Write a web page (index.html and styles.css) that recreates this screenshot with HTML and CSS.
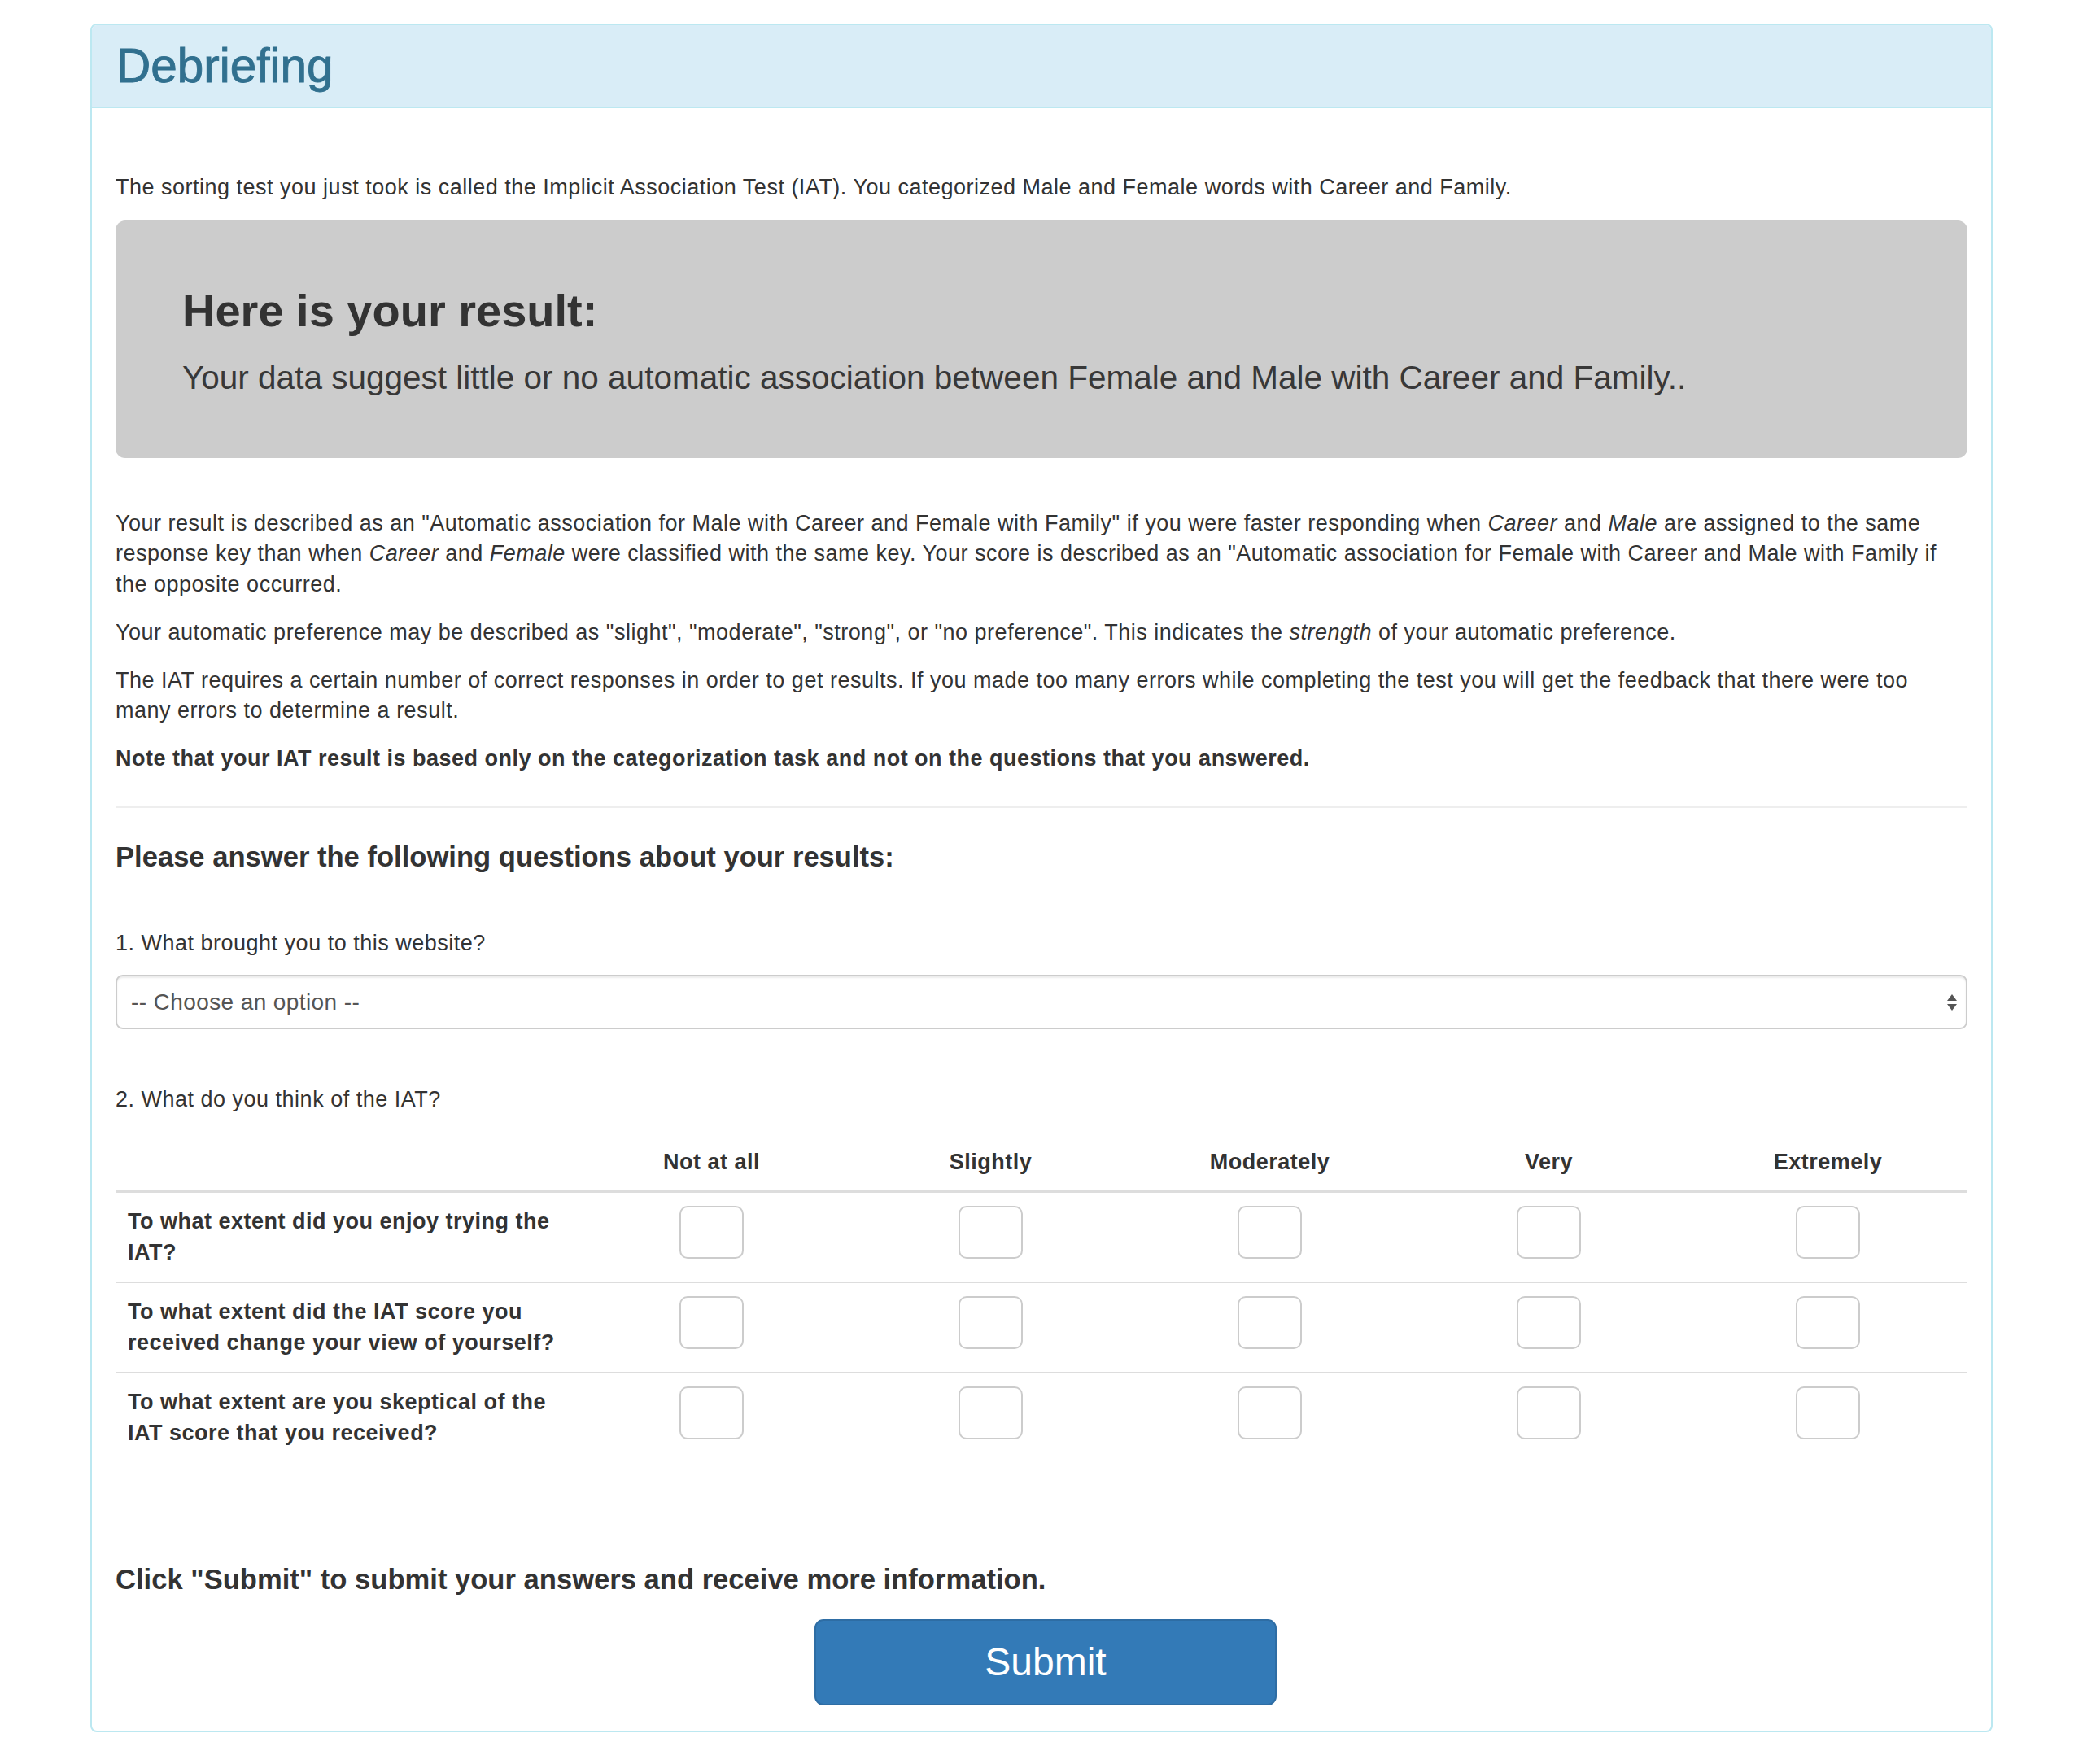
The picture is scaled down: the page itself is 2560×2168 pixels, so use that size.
FILE: index.html
```html
<!DOCTYPE html>
<html lang="en">
<head>
<meta charset="utf-8">
<title>Debriefing</title>
<link rel="stylesheet" href="styles.css">
</head>
<body>
<div class="page">
  <section class="panel">
    <header class="panel-heading">
      <h2 class="panel-title">Debriefing</h2>
    </header>
    <div class="panel-body">
      <p class="intro">The sorting test you just took is called the Implicit Association Test (IAT). You categorized Male and Female words with Career and Family.</p>

      <div class="jumbotron">
        <h2 class="result-title">Here is your result:</h2>
        <p class="result-text">Your data suggest little or no automatic association between Female and Male with Career and Family..</p>
      </div>

      <p>Your result is described as an "Automatic association for Male with Career and Female with Family" if you were faster responding when <em>Career</em> and <em>Male</em> are assigned to the same response key than when <em>Career</em> and <em>Female</em> were classified with the same key. Your score is described as an "Automatic association for Female with Career and Male with Family if the opposite occurred.</p>
      <p>Your automatic preference may be described as "slight", "moderate", "strong", or "no preference". This indicates the <em>strength</em> of your automatic preference.</p>
      <p>The IAT requires a certain number of correct responses in order to get results. If you made too many errors while completing the test you will get the feedback that there were too many errors to determine a result.</p>
      <p class="note"><strong>Note that your IAT result is based only on the categorization task and not on the questions that you answered.</strong></p>

      <hr class="divider">

      <h4 class="section-title">Please answer the following questions about your results:</h4>

      <div class="question q1">
        <label class="q-label">1. What brought you to this website?</label>
        <div class="select">
          <span class="select-text">-- Choose an option --</span>
          <svg class="select-arrow" width="14" height="24" viewBox="0 0 14 24"><path d="M7 2 L13 10 L1 10 Z" fill="#555"/><path d="M1 14 L13 14 L7 22 Z" fill="#555"/></svg>
        </div>
      </div>

      <div class="question q2">
        <label class="q-label">2. What do you think of the IAT?</label>
        <table class="likert">
          <colgroup>
            <col class="col-label">
            <col class="col-opt"><col class="col-opt"><col class="col-opt"><col class="col-opt"><col class="col-opt">
          </colgroup>
          <thead>
            <tr><th></th><th>Not at all</th><th>Slightly</th><th>Moderately</th><th>Very</th><th>Extremely</th></tr>
          </thead>
          <tbody>
            <tr>
              <th class="row-label">To what extent did you enjoy trying the IAT?</th>
              <td><span class="box"></span></td><td><span class="box"></span></td><td><span class="box"></span></td><td><span class="box"></span></td><td><span class="box"></span></td>
            </tr>
            <tr>
              <th class="row-label">To what extent did the IAT score you received change your view of yourself?</th>
              <td><span class="box"></span></td><td><span class="box"></span></td><td><span class="box"></span></td><td><span class="box"></span></td><td><span class="box"></span></td>
            </tr>
            <tr>
              <th class="row-label">To what extent are you skeptical of the IAT score that you received?</th>
              <td><span class="box"></span></td><td><span class="box"></span></td><td><span class="box"></span></td><td><span class="box"></span></td><td><span class="box"></span></td>
            </tr>
          </tbody>
        </table>
      </div>

      <h4 class="submit-title">Click "Submit" to submit your answers and receive more information.</h4>
      <div class="submit-row">
        <button class="btn-submit" type="button">Submit</button>
      </div>
    </div>
  </section>
</div>
</body>
</html>
```

FILE: styles.css
```css
html, body {
  margin: 0;
  padding: 0;
  background: #fff;
}
body {
  font-family: "Liberation Sans", Arial, Helvetica, sans-serif;
  font-size: 27px;
  letter-spacing: 0.5px;
  line-height: 37.5px;
  color: #333;
}
.page {
  padding: 29px 111px 40px 111px;
}
.panel {
  border: 2px solid #bce8f1;
  border-radius: 8px;
  background: #fff;
  overflow: hidden;
}
.panel-heading {
  background: #d9edf7;
  border-bottom: 2px solid #bce8f1;
  height: 100px;
  padding: 0 30px;
  display: flex;
  align-items: center;
}
.panel-title {
  margin: 0;
  font-size: 58.5px;
  line-height: 62px;
  font-weight: 400;
  letter-spacing: 0;
  -webkit-text-stroke: 0.9px #31708f;
  color: #31708f;
}
.panel-body {
  padding: 78.5px 29px 31px 29px;
}
p {
  margin: 0 0 21.6px 0;
}
.intro {
  margin-bottom: 21.5px;
}
.jumbotron {
  background: #ccc;
  border-radius: 12px;
  padding: 80px 82px 71.5px 82px;
  margin-bottom: 61.6px;
}
.result-title {
  margin: 0 0 24px 0;
  font-size: 56px;
  line-height: 62px;
  font-weight: 700;
  letter-spacing: 0;
  color: #333;
}
.result-text {
  margin: 0;
  font-size: 40.5px;
  line-height: 55px;
  font-weight: 400;
  letter-spacing: 0;
  color: #383838;
}
.note {
  margin-bottom: 0;
}
.divider {
  border: 0;
  border-top: 2px solid #eee;
  margin: 39.5px 0 41.6px 0;
}
.section-title,
.submit-title {
  margin: 0;
  font-size: 34.6px;
  line-height: 37px;
  font-weight: 700;
  letter-spacing: 0;
  color: #333;
}
.question {
  display: flex;
  flex-direction: column;
}
.q1 {
  margin-top: 69px;
}
.q1 .q-label {
  margin-bottom: 20px;
}
.q2 {
  margin-top: 68px;
}
.q-label {
  display: block;
  margin-bottom: 24px;
}
.select {
  height: 67px;
  box-sizing: border-box;
  border: 2px solid #ccc;
  border-radius: 9px;
  box-shadow: inset 0 2px 2px rgba(0,0,0,0.075);
  display: flex;
  align-items: center;
  justify-content: space-between;
  padding: 0 10px 0 17px;
  color: #555;
  font-size: 28px;
  letter-spacing: 0.4px;
}
.select-arrow {
  display: block;
}
.likert {
  width: 100%;
  border-collapse: collapse;
  table-layout: fixed;
}
.col-label {
  width: 561px;
}
.likert thead th {
  font-weight: 700;
  text-align: center;
  padding: 15px 15px;
  border-bottom: 4px solid #ddd;
}
.likert tbody th,
.likert tbody td {
  padding: 17px 15px;
  vertical-align: top;
  border-top: 2px solid #ddd;
}
.likert tbody tr:first-child th,
.likert tbody tr:first-child td {
  border-top: 0;
}
.row-label {
  text-align: left;
  font-weight: 700;
  padding-left: 16px;
  padding-right: 8px;
}
.likert td {
  text-align: center;
}
.box {
  display: inline-block;
  width: 79px;
  height: 65px;
  box-sizing: border-box;
  border: 2px solid #ccc;
  border-radius: 10px;
  vertical-align: top;
  margin-top: -1px;
}
.submit-title {
  margin-top: 126px;
}
.submit-row {
  display: flex;
  justify-content: center;
  margin-top: 30px;
  padding-left: 10px;
}
.btn-submit {
  width: 568px;
  height: 106px;
  background: #337ab7;
  border: 2px solid #2e6da4;
  border-radius: 11px;
  color: #fff;
  font-family: "Liberation Sans", Arial, Helvetica, sans-serif;
  font-size: 48px;
  letter-spacing: 0;
  line-height: 1;
}
```
